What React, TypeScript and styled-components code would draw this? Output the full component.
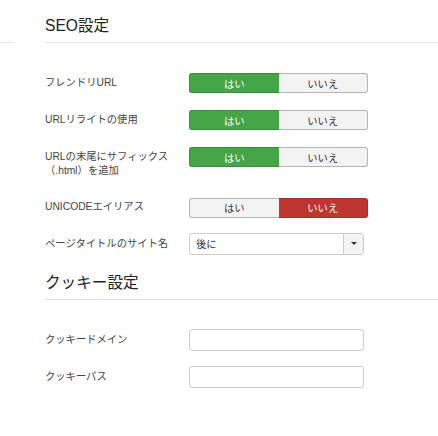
import React from "react";
import styled, { createGlobalStyle } from "styled-components";

const Global = createGlobalStyle`
  html, body { margin: 0; padding: 0; background: #fff; }
  body {
    font-family: "Liberation Sans", "Noto Sans CJK JP", sans-serif;
    color: #333;
  }
`;

const Page = styled.div`
  display: flex;
  align-items: flex-start;
  width: 438px;
  height: 436px;
  overflow: hidden;
  padding-top: 16px;
  box-sizing: border-box;
`;

const SideRule = styled.div`
  width: 13px;
  flex: 0 0 13px;
  height: 26px;
  border-bottom: 1px solid #e3e3e3;
  margin-right: 32px;
`;

const Main = styled.div`
  flex: 1;
  display: flex;
  flex-direction: column;
`;

const Heading = styled.h3`
  margin: 0;
  font-family: "Liberation Sans", "Noto Sans CJK JP", sans-serif;
  font-weight: normal;
  font-size: 15.6px;
  line-height: 20px;
  padding-bottom: 6px;
  border-bottom: 1px solid #e3e3e3;
  color: #222;
`;

const Fields = styled.div<{ $top: number; $bottom: number }>`
  display: flex;
  flex-direction: column;
  padding-top: ${(p) => p.$top}px;
  padding-bottom: ${(p) => p.$bottom}px;
`;

const Row = styled.div<{ $gap: number }>`
  display: flex;
  align-items: flex-start;
  margin-bottom: ${(p) => p.$gap}px;
`;

const Label = styled.div<{ $pad: number }>`
  width: 144px;
  flex: 0 0 144px;
  font-size: 10.3px;
  line-height: 14.5px;
  padding-top: ${(p) => p.$pad}px;
  color: #444;
`;

const Toggle = styled.div`
  display: flex;
  width: 179px;
  height: 20px;
`;

type Tone = "yes" | "no" | "off";

const ToggleButton = styled.div<{ $tone: Tone; $side: "l" | "r" }>`
  flex: 1;
  display: flex;
  align-items: center;
  justify-content: center;
  font-size: 10.3px;
  box-sizing: border-box;
  border: 1px solid
    ${(p) => (p.$tone === "yes" ? "#3c8f3c" : p.$tone === "no" ? "#a42e28" : "#b5b5b5")};
  background: ${(p) => (p.$tone === "yes" ? "#46a546" : p.$tone === "no" ? "#bd362f" : "#f3f3f3")};
  color: ${(p) => (p.$tone === "off" ? "#333" : "#fff")};
  border-radius: ${(p) => (p.$side === "l" ? "3px 0 0 3px" : "0 3px 3px 0")};
  ${(p) => (p.$side === "l" ? "border-right: none;" : "border-left: none;")}
`;

const Select = styled.div`
  display: flex;
  width: 175px;
  height: 22px;
  box-sizing: border-box;
  border: 1px solid #ccc;
  border-radius: 3px;
  overflow: hidden;
`;

const SelectValue = styled.div`
  flex: 1;
  display: flex;
  align-items: center;
  padding-left: 6px;
  font-size: 10.3px;
  color: #333;
  background: #fff;
`;

const SelectArrow = styled.div`
  width: 19px;
  display: flex;
  align-items: center;
  justify-content: center;
  border-left: 1px solid #ccc;
  background: #f3f3f3;
`;

const Caret = styled.span`
  width: 0;
  height: 0;
  border-left: 3px solid transparent;
  border-right: 3px solid transparent;
  border-top: 3px solid #333;
`;

const TextInput = styled.input`
  width: 175px;
  height: 22px;
  box-sizing: border-box;
  border: 1px solid #ccc;
  border-radius: 3px;
  background: #fff;
  padding: 0 6px;
  font-size: 10.3px;
  outline: none;
  margin: 0;
`;

function YesNo({ value }: { value: boolean }) {
  return (
    <Toggle>
      <ToggleButton $side="l" $tone={value ? "yes" : "off"}>はい</ToggleButton>
      <ToggleButton $side="r" $tone={value ? "off" : "no"}>いいえ</ToggleButton>
    </Toggle>
  );
}

export default function App() {
  return (
    <>
      <Global />
      <Page>
        <SideRule />
        <Main>
          <Heading>SEO設定</Heading>
          <Fields $top={30} $bottom={18}>
            <Row $gap={17}>
              <Label $pad={2.5}>フレンドリURL</Label>
              <YesNo value={true} />
            </Row>
            <Row $gap={17}>
              <Label $pad={2.5}>URLリライトの使用</Label>
              <YesNo value={true} />
            </Row>
            <Row $gap={19}>
              <Label $pad={2.5}>
                URLの末尾にサフィックス
                <br />
                （.html）を追加
              </Label>
              <YesNo value={true} />
            </Row>
            <Row $gap={15}>
              <Label $pad={2.5}>UNICODEエイリアス</Label>
              <YesNo value={false} />
            </Row>
            <Row $gap={0}>
              <Label $pad={4}>ページタイトルのサイト名</Label>
              <Select>
                <SelectValue>後に</SelectValue>
                <SelectArrow>
                  <Caret />
                </SelectArrow>
              </Select>
            </Row>
          </Fields>
          <Heading>クッキー設定</Heading>
          <Fields $top={29} $bottom={0}>
            <Row $gap={15}>
              <Label $pad={4}>クッキードメイン</Label>
              <TextInput type="text" />
            </Row>
            <Row $gap={0}>
              <Label $pad={4}>クッキーパス</Label>
              <TextInput type="text" />
            </Row>
          </Fields>
        </Main>
      </Page>
    </>
  );
}
